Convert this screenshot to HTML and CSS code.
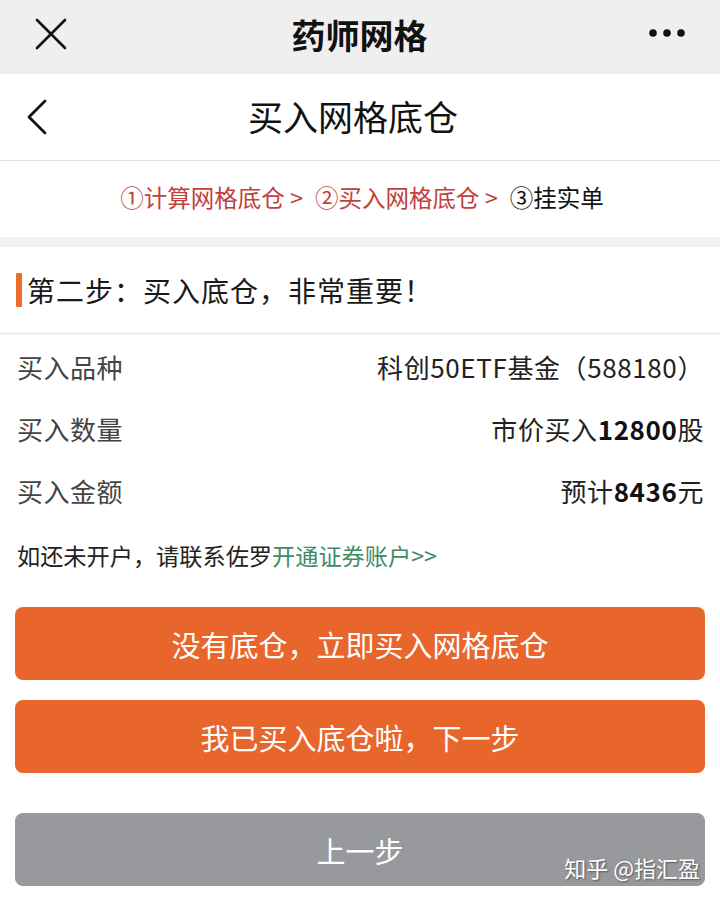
FILE: index.html
```html
<!DOCTYPE html>
<html lang="zh-CN">

<head>
    <meta charset="UTF-8">
    <meta name="viewport" content="width=device-width, initial-scale=1.0">
    <title>药师网格</title>
    <link rel="stylesheet" href="styles.css">
</head>

<body>
    <div class="topbar">
        <svg class="close-icon" width="32" height="32" viewBox="0 0 32 32">
            <path d="M2 2 L30 30 M30 2 L2 30" stroke="#111" stroke-width="2.6" stroke-linecap="round" fill="none" />
        </svg>
        <div class="topbar-title">药师网格</div>
        <svg class="more-icon" width="38" height="10" viewBox="0 0 38 10">
            <circle cx="5" cy="5" r="3.8" fill="#111" />
            <circle cx="19" cy="5" r="3.8" fill="#111" />
            <circle cx="33" cy="5" r="3.8" fill="#111" />
        </svg>
    </div>

    <div class="header">
        <svg class="back-icon" width="22" height="38" viewBox="0 0 22 38">
            <path d="M19 3 L3 19 L19 35" stroke="#111" stroke-width="2.8" stroke-linecap="round" stroke-linejoin="round" fill="none" />
        </svg>
        <div class="header-title">买入网格底仓</div>
    </div>

    <div class="steps">
        <span class="step-done">①计算网格底仓 &gt;</span>
        <span class="step-done">②买入网格底仓 &gt;</span>
        <span class="step-now">③挂实单</span>
    </div>

    <div class="section-title">
        <span class="mark"></span>第二步：买入底仓，非常重要！
    </div>

    <div class="info">
        <div class="row">
            <span class="label">买入品种</span>
            <span class="value">科创50ETF基金（588180）</span>
        </div>
        <div class="row">
            <span class="label">买入数量</span>
            <span class="value">市价买入<b>12800</b>股</span>
        </div>
        <div class="row">
            <span class="label">买入金额</span>
            <span class="value">预计<b>8436</b>元</span>
        </div>
    </div>

    <p class="note">如还未开户，请联系佐罗<a href="#">开通证券账户&gt;&gt;</a></p>

    <div class="actions">
        <button class="btn btn-orange">没有底仓，立即买入网格底仓</button>
        <button class="btn btn-orange">我已买入底仓啦，下一步</button>
        <button class="btn btn-gray prev">上一步</button>
    </div>

    <div class="watermark">知乎 @指汇盈</div>
</body>

</html>
```

FILE: styles.css
```css
body {
    font-family: "Noto Sans CJK SC", "Noto Sans", sans-serif;
    margin: 0;
    padding: 0;
    background-color: #fff;
    color: #222;
    width: 720px;
    height: 900px;
    overflow: hidden;
    position: relative;
}

.topbar {
    height: 74px;
    background-color: #efeff0;
    display: flex;
    align-items: center;
    justify-content: space-between;
    padding: 0 34px 0 35px;
}

.topbar-title {
    font-size: 34px;
    font-weight: bold;
    color: #111;
    margin-left: 4px;
    margin-top: -6px;
}

.more-icon {
    margin-top: -8px;
}

.close-icon {
    margin-top: -6px;
}

.header {
    height: 86px;
    display: flex;
    align-items: center;
    border-bottom: 1px solid #e4e4e4;
    padding-left: 26px;
}

.header-title {
    flex: 1;
    text-align: center;
    font-size: 35px;
    color: #111;
    margin-right: 62px;
    margin-top: -4px;
}

/* step progress */
.steps {
    height: 76px;
    display: flex;
    align-items: center;
    justify-content: center;
    gap: 12px;
    font-size: 23.5px;
    border-bottom: 10px solid #f2f2f3;
    padding: 0 0 4px 4px;
    box-sizing: border-box;
    height: 86px;
}

.step-done {
    color: #c2413a;
}

.step-now {
    color: #111;
}

.section-title {
    height: 85px;
    display: flex;
    align-items: center;
    font-size: 28px;
    letter-spacing: 1px;
    color: #1a1a1a;
    padding-left: 16px;
    border-bottom: 3px solid #f2f2f3;
}

.section-title .mark {
    width: 6px;
    height: 34px;
    background-color: #ec6d2a;
    border-radius: 1px;
    margin-right: 5px;
}

.info {
    padding: 0 16px 0 17px;
}

.row {
    height: 62px;
    display: flex;
    align-items: center;
    justify-content: space-between;
    font-size: 26px;
}

.label {
    color: #444;
    letter-spacing: 0.5px;
}

.value {
    color: #222;
    letter-spacing: 0.6px;
}

.value b {
    font-weight: bold;
    color: #111;
}

.note {
    margin: 0;
    padding: 17px 17px 0;
    height: 53px;
    font-size: 23.2px;
    color: #222;
}

.note a {
    color: #3f8a67;
    text-decoration: none;
}

.actions {
    padding: 16px 15px 0;
    display: flex;
    flex-direction: column;
    gap: 20px;
}

.btn {
    height: 73px;
    border: none;
    border-radius: 8px;
    font-family: inherit;
    font-size: 29px;
    color: #fff;
    cursor: pointer;
}

.btn-orange {
    background-color: #e8662b;
}

.btn-gray {
    background-color: #98999c;
}

.prev {
    margin-top: 20px;
}

.watermark {
    position: absolute;
    right: 20px;
    bottom: 17px;
    font-size: 22px;
    color: #fff;
    text-shadow: 1px 1px 2px rgba(0, 0, 0, 0.45);
}
```
